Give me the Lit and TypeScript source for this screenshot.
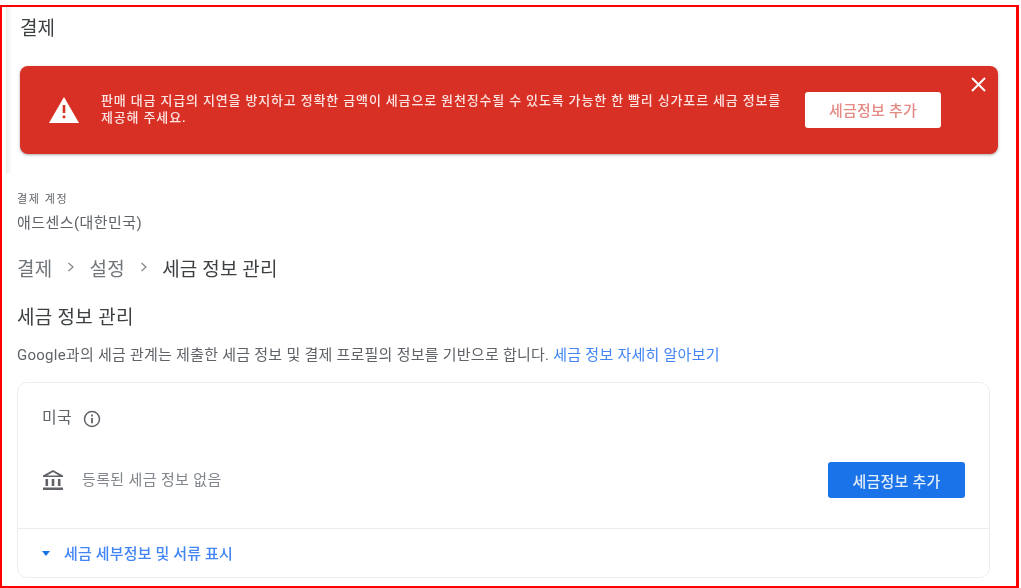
import { LitElement, html, css } from "lit";
import { customElement } from "lit/decorators.js";

@customElement("app-root")
export class AppRoot extends LitElement {
  static styles = css`
    :host {
      display: block;
      width: 1021px;
      height: 588px;
      padding-top: 5px;
      box-sizing: border-box;
      font-family: Roboto, "Noto Sans CJK KR", sans-serif;
      background: #fff;
      overflow: hidden;
    }
    .frame {
      width: 1019px;
      height: 583px;
      box-sizing: border-box;
      border: 2px solid #fe0000;
      border-right-width: 3px;
      overflow: hidden;
    }
    .content {
      filter: blur(0.35px);
    }
    .top {
      margin-left: 4px;
      height: 166px;
      box-sizing: border-box;
      padding: 11px 18px 0 14px;
      background: linear-gradient(90deg, #ececec 0, #f6f6f6 3px, #fff 6px);
    }
    .page-title {
      font-size: 19px;
      line-height: 22px;
      color: #3c4043;
    }
    .banner {
      margin-top: 26px;
      height: 88px;
      width: 978px;
      box-sizing: border-box;
      background: #d93025;
      border-radius: 8px;
      box-shadow: 0 1px 3px rgba(60, 64, 67, 0.45);
      display: flex;
      align-items: center;
      padding: 0 57px 0 28px;
      position: relative;
    }
    .warn {
      width: 32px;
      height: 32px;
      flex: none;
      margin-right: 21px;
      margin-top: 1px;
    }
    .msg {
      flex: 1;
      color: #fbe4e2;
      font-size: 13px;
      line-height: 17px;
      font-weight: 500;
      margin-top: -3px;
      letter-spacing: 0.85px;
      word-break: keep-all;
    }
    .btn {
      flex: none;
      height: 36px;
      border-radius: 3px;
      display: flex;
      align-items: center;
      justify-content: center;
      font-size: 15px;
      letter-spacing: 0.2px;
      font-weight: 500;
    }
    .btn-white {
      width: 136px;
      background: #fff;
      color: #e58a84;
      margin-top: -1px;
    }
    .close {
      position: absolute;
      top: 8px;
      right: 10px;
      width: 20px;
      height: 20px;
    }
    .body {
      padding: 20px 0 0 15px;
    }
    .acct-label {
      font-size: 11px;
      line-height: 14px;
      color: #5f6368;
      letter-spacing: 1.6px;
    }
    .acct-name {
      font-size: 15px;
      line-height: 20px;
      color: #5f6368;
      margin-top: 6px;
      letter-spacing: 0.45px;
    }
    .crumbs {
      display: flex;
      align-items: center;
      margin-top: 22px;
      height: 24px;
      font-size: 19px;
      letter-spacing: 0.3px;
      color: #70757a;
    }
    .crumbs .sep {
      width: 12px;
      height: 12px;
      margin: 0 12.5px;
    }
    .crumbs .cur {
      color: #3c4043;
      letter-spacing: 0.15px;
    }
    .h2 {
      margin: 27px 0 0;
      font-size: 19px;
      line-height: 24px;
      letter-spacing: 0.3px;
      color: #3c4043;
      font-weight: 400;
    }
    .desc {
      margin-top: 15px;
      font-size: 15px;
      line-height: 20px;
      letter-spacing: 0.25px;
      color: #5f6368;
    }
    .desc a,
    .more {
      color: #4285f4;
    }
    .card {
      margin-top: 17px;
      width: 973px;
      height: 196px;
      box-sizing: border-box;
      border: 1px solid #eceded;
      border-radius: 10px;
      display: flex;
      flex-direction: column;
    }
    .card-main {
      height: 146px;
      box-sizing: border-box;
      padding: 24px 24px 0;
      border-bottom: 1px solid #eceded;
    }
    .country {
      display: flex;
      align-items: center;
      gap: 11px;
      height: 22px;
      font-size: 16px;
      letter-spacing: 0.3px;
      color: #5f6368;
    }
    .country span {
      margin-top: -5px;
    }
    .info {
      width: 18px;
      height: 18px;
      margin-top: 2px;
    }
    .row {
      display: flex;
      align-items: center;
      margin-top: 33px;
    }
    .bank {
      width: 22px;
      height: 22px;
      margin-right: 18px;
      flex: none;
    }
    .none {
      flex: 1;
      font-size: 15px;
      letter-spacing: 0.35px;
      color: #80868b;
      margin-top: -4px;
    }
    .btn-blue {
      width: 137px;
      background: #1a73e8;
      color: #e3eefc;
    }
    .card-foot {
      flex: 1;
      display: flex;
      align-items: center;
      padding-left: 24px;
      font-size: 15px;
      letter-spacing: 0.15px;
      font-weight: 500;
    }
    .card-foot span {
      margin-top: -2px;
    }
    .caret {
      width: 8px;
      height: 5px;
      margin-right: 14px;
    }
  `;

  render() {
    const sep = html`<svg class="sep" viewBox="0 0 12 12" fill="none" stroke="#80868b" stroke-width="1.2"><path d="M3.500 2 8 6 3.500 10"/></svg>`;
    return html`
      <div class="frame">
        <div class="content">
          <section class="top">
            <div class="page-title">결제</div>
            <div class="banner">
              <svg class="warn" viewBox="0 0 32 32">
                <path fill="#fff" d="M1 28 16 2l15 26z"/>
                <path fill="#d93025" d="M14.700 10h2.600v8h-2.600zM14.700 20.500h2.600v2.800h-2.600z"/>
              </svg>
              <div class="msg">판매 대금 지급의 지연을 방지하고 정확한 금액이 세금으로 원천징수될 수 있도록 가능한 한 빨리 싱가포르 세금 정보를 제공해 주세요.</div>
              <div class="btn btn-white">세금정보 추가</div>
              <svg class="close" viewBox="0 0 20 20" fill="none" stroke="#fff" stroke-width="2"><path d="M4 4 17 17M17 4 4 17"/></svg>
            </div>
          </section>
          <section class="body">
            <div class="acct-label">결제 계정</div>
            <div class="acct-name">애드센스(대한민국)</div>
            <nav class="crumbs"><span>결제</span>${sep}<span>설정</span>${sep}<span class="cur">세금 정보 관리</span></nav>
            <h2 class="h2">세금 정보 관리</h2>
            <div class="desc">Google과의 세금 관계는 제출한 세금 정보 및 결제 프로필의 정보를 기반으로 합니다. <a>세금 정보 자세히 알아보기</a></div>
            <div class="card">
              <div class="card-main">
                <div class="country">
                  <span>미국</span>
                  <svg class="info" viewBox="0 0 18 18" fill="none" stroke="#5f6368"><circle cx="9" cy="9" r="7.500" stroke-width="1.500"/><path stroke-width="1.800" d="M9 8v5.200"/><path stroke-width="1.800" d="M9 4.600v1.800"/></svg>
                </div>
                <div class="row">
                  <svg class="bank" viewBox="0 0 22 22" fill="#5f6368">
                    <path d="M11 1 1 6.500V8h20V6.500zM11 3l6 3.500H5z"/>
                    <path d="M3.500 10h2.600v7H3.500zM9.700 10h2.600v7H9.700zM15.900 10h2.600v7h-2.600zM1 18.500h20V21H1z"/>
                  </svg>
                  <div class="none">등록된 세금 정보 없음</div>
                  <div class="btn btn-blue">세금정보 추가</div>
                </div>
              </div>
              <div class="card-foot more">
                <svg class="caret" viewBox="0 0 8 5" fill="#1a73e8"><path d="M0 0h8L4 5z"/></svg>
                <span>세금 세부정보 및 서류 표시</span>
              </div>
            </div>
          </section>
        </div>
      </div>
    `;
  }
}
